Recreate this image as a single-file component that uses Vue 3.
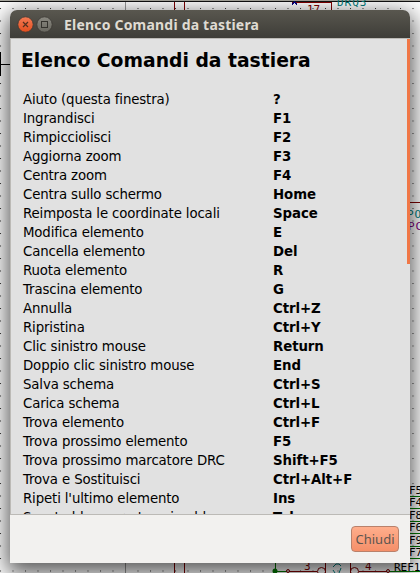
<script setup>
const commands = [
  ['Aiuto (questa finestra)', '?'],
  ['Ingrandisci', 'F1'],
  ['Rimpicciolisci', 'F2'],
  ['Aggiorna zoom', 'F3'],
  ['Centra zoom', 'F4'],
  ['Centra sullo schermo', 'Home'],
  ['Reimposta le coordinate locali', 'Space'],
  ['Modifica elemento', 'E'],
  ['Cancella elemento', 'Del'],
  ['Ruota elemento', 'R'],
  ['Trascina elemento', 'G'],
  ['Annulla', 'Ctrl+Z'],
  ['Ripristina', 'Ctrl+Y'],
  ['Clic sinistro mouse', 'Return'],
  ['Doppio clic sinistro mouse', 'End'],
  ['Salva schema', 'Ctrl+S'],
  ['Carica schema', 'Ctrl+L'],
  ['Trova elemento', 'Ctrl+F'],
  ['Trova prossimo elemento', 'F5'],
  ['Trova prossimo marcatore DRC', 'Shift+F5'],
  ['Trova e Sostituisci', 'Ctrl+Alt+F'],
  ["Ripeti l'ultimo elemento", 'Ins'],
  ['Sposta blocco -> trascina blocco', 'Tab'],
]
const pins = [['F5', 496], ['F4', 508], ['F8', 521], ['F6', 533], ['F9', 546], ['F7', 558]]
</script>

<template>
  <div class="desktop">
    <svg class="sheet" width="420" height="573" viewBox="0 0 420 573">
      <defs>
        <pattern id="dots" x="0" y="8" width="12.5" height="12.5" patternUnits="userSpaceOnUse">
          <rect width="1" height="1" fill="#333" />
        </pattern>
      </defs>
      <rect width="420" height="573" fill="#fff" />
      <rect width="420" height="573" fill="url(#dots)" />
      <g fill="none" shape-rendering="crispEdges">
        <path d="M0 .5H420" stroke="#aaa9a0" />
        <path d="M0 1.5H420" stroke="#111" />
        <path d="M125.500 2V12M125.500 560V573" stroke="#999" />
        <path d="M174.500 2V12M184.500 2V12M174.500 560V573M184.500 560V573" stroke="#800000" />
        <path d="M292 2.500H331.500V12" stroke="#800000" />
        <path d="M292 4.500L294.500 2L297 4.500" stroke="#000080" />
        <path d="M0 64.500H12M.5 52V76" stroke="#000" />
        <path d="M409 202.500H420" stroke="#800000" />
        <path v-for="p in pins" :key="p[0]" :d="`M410 ${p[1] + .5}H420`" stroke="#007800" />
        <path d="M275.500 563V571M275 571.500H287M389 571.500H420" stroke="#007800" />
        <path d="M289 571.500H317M325.500 563V573M350.500 563V573M359 571.500H387" stroke="#800000" />
      </g>
      <g fill="none">
        <circle cx="288" cy="571" r="1.500" stroke="#800000" />
        <circle cx="388" cy="571" r="1.500" stroke="#800000" />
        <circle cx="321.500" cy="571.500" r="4" stroke="#800000" />
        <circle cx="354.500" cy="571.500" r="4" stroke="#800000" />
        <path d="M333 567L336 564H339L341 566M333 570L335 573M341 568L339 573" stroke="#008080" />
      </g>
      <circle cx="275" cy="571" r="2.500" fill="#007800" />
      <g class="plot">
        <text v-for="p in pins" :key="p[0]" x="409" :y="p[1] - 2">{{ p[0] }}</text>
        <text x="394" y="571">REF1</text>
        <text x="307" y="13" class="red">17</text>
        <text x="337" y="6" class="teal wide">DRQ3</text>
        <text x="407" y="218" class="teal wide">PO</text>
        <text x="408" y="230" class="violet wide">PC</text>
        <text x="304" y="570" class="red">3</text>
        <text x="365" y="570" class="red">4</text>
      </g>
    </svg>
    <section class="window">
      <header class="titlebar">
        <svg class="controls" width="42" height="18" viewBox="0 0 42 18">
          <defs>
            <linearGradient id="close" x2="0" y2="1"><stop stop-color="#f37b55" /><stop offset="1" stop-color="#e34e1e" /></linearGradient>
            <linearGradient id="max" x2="0" y2="1"><stop stop-color="#8a8981" /><stop offset="1" stop-color="#68675f" /></linearGradient>
          </defs>
          <circle cx="9.500" cy="9.500" r="7.700" fill="url(#close)" stroke="#3b3933" stroke-width=".8" />
          <path d="M7 7L12 12M12 7L7 12" stroke="#54301f" stroke-width="1.200" />
          <circle cx="28.500" cy="9.500" r="7.700" fill="url(#max)" stroke="#3b3933" stroke-width=".8" />
          <rect x="25.500" y="6.500" width="6" height="6" fill="none" stroke="#34332e" />
        </svg>
        <span class="caption">Elenco Comandi da tastiera</span>
      </header>
      <main class="content">
        <h1>Elenco Comandi da tastiera</h1>
        <dl>
          <div v-for="[name, key] in commands" :key="name" class="row">
            <dt>{{ name }}</dt>
            <dd>{{ key }}</dd>
          </div>
        </dl>
        <i class="thumb"></i>
      </main>
      <footer><button>Chiudi</button></footer>
    </section>
  </div>
</template>

<style>
body { margin: 0; overflow: hidden; }
</style>
<style scoped>
.desktop { position: relative; width: 420px; height: 573px; overflow: hidden; box-sizing: border-box; padding: 10px; }
.sheet { position: absolute; left: 0; top: 0; }
.window { position: relative; width: 400px; height: 553px; display: flex; flex-direction: column; border-radius: 7px 7px 0 0; box-shadow: 0 7px 22px 3px rgba(0,0,0,.66); font-family: "DejaVu Sans", sans-serif; }
.titlebar { height: 28px; flex: none; display: flex; align-items: center; padding-left: 6px; box-sizing: border-box; border-radius: 7px 7px 0 0; background: linear-gradient(#59574f, #3e3d38); }
.caption { margin-left: 6px; padding-top: 1px; color: #dfdbd2; font: bold 14px/20px "Noto Sans", sans-serif; letter-spacing: .2px; white-space: nowrap; }
.content { position: relative; height: 477px; box-sizing: border-box; border: 1px solid #bcbab6; border-right: 0; background: #e1e1e1; overflow: hidden; padding: 10px 11px 0 10px; color: #000; }
h1 { font: bold 18.75px/24px "DejaVu Sans", sans-serif; margin: 0 0 17px; white-space: nowrap; }
dl { margin: 0; padding-left: 2px; }
.row { display: grid; grid-template-columns: 250px 1fr; height: 19px; font-size: 13.33px; line-height: 19px; white-space: nowrap; }
dt, dd { margin: 0; }
dt { letter-spacing: -.14px; }
dd { font-weight: bold; letter-spacing: -.08px; }
.thumb { position: absolute; right: 0; top: 0; width: 3px; height: 225px; background: #f07746; }
footer { flex: 1; display: flex; justify-content: flex-end; align-items: center; padding-right: 11px; background: #f2f1ef; }
button { width: 48px; height: 26px; padding: 0; border: 1px solid #b9816b; border-radius: 4px; background: linear-gradient(#ffae8c, #f58f69); color: #5d5650; font: 13px "Noto Sans", sans-serif; }
.plot { font: 11px "DejaVu Sans Mono", monospace; fill: #000; }
.red { fill: #800000; }
.teal { fill: #008080; }
.violet { fill: #800080; }
.wide { letter-spacing: 1px; }
</style>
